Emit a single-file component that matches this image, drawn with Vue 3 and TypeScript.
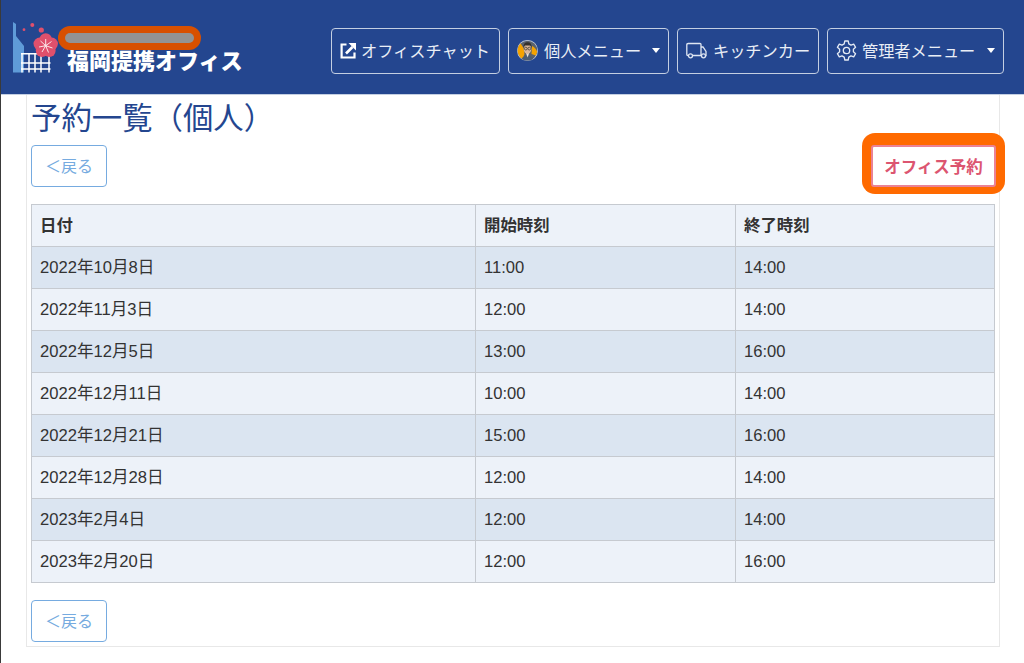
<script setup lang="ts">
const rows: string[][] = [
  ['2022年10月8日', '11:00', '14:00'],
  ['2022年11月3日', '12:00', '14:00'],
  ['2022年12月5日', '13:00', '16:00'],
  ['2022年12月11日', '10:00', '14:00'],
  ['2022年12月21日', '15:00', '16:00'],
  ['2022年12月28日', '12:00', '14:00'],
  ['2023年2月4日', '12:00', '14:00'],
  ['2023年2月20日', '12:00', '16:00'],
]
const petals = [
  [32.7, 19.4],
  [38.7, 23.8],
  [36.4, 30.8],
  [29, 30.8],
  [26.7, 23.8],
]
const stamens = [
  [32.7, 19],
  [38.5, 21.5],
  [39.5, 28],
  [35.5, 32.5],
  [29, 32],
  [26, 27],
  [27.5, 21],
]
</script>

<template>
  <div class="page">
    <header class="topbar">
      <div class="brand">
        <svg class="logo" width="56" height="60" viewBox="0 0 56 60">
          <path d="M0 2 L3 4 L3 16 L11 26 L11 52.5 L0 52.5 Z" fill="#5f9bd8" />
          <circle cx="11" cy="9.7" r="1.4" fill="#e0506c" />
          <circle cx="19.3" cy="5" r="2" fill="#e0506c" />
          <circle cx="28.3" cy="10" r="2.6" fill="#e0506c" />
          <g fill="none" stroke="#fff" stroke-width="1.5">
            <path d="M8 33.7 H37.5 M8 43 H37.5 M8 49 H37.5" />
            <path d="M9 33 V52.5 M16 33 V52.5 M22 33 V52.5 M28 33 V52.5 M36 33 V52.5" />
          </g>
          <g fill="#e0506c">
            <circle v-for="p in petals" :key="p[0] + '-' + p[1]" :cx="p[0]" :cy="p[1]" r="6.2" />
            <circle cx="32.7" cy="25.7" r="6" />
          </g>
          <g stroke="#fbe3e7" stroke-width="1" fill="#fbe3e7">
            <line v-for="s in stamens" :key="s[0]" x1="32.7" y1="25.7" :x2="s[0]" :y2="s[1]" />
            <circle cx="32.7" cy="25.7" r="0.8" />
          </g>
        </svg>
        <span class="brand-name">福岡提携オフィス</span>
        <span class="redact"><span class="redact-inner"></span></span>
      </div>
      <nav class="nav">
        <button class="nav-btn chat">
          <svg width="17" height="17" viewBox="0 0 17 17" fill="none" stroke="#fff" stroke-width="2.2">
            <path d="M6.5 2.5 H1.6 V15.5 H14.5 V10.5" />
            <path d="M6 11.5 L12.5 5" stroke-width="2.6" />
            <path d="M8.5 1 H16 V8.5 Z" fill="#fff" stroke="none" />
          </svg>
          <span>オフィスチャット</span>
        </button>
        <button class="nav-btn personal">
          <svg width="21" height="21" viewBox="0 0 21 21">
            <circle cx="10.5" cy="10.5" r="10.5" fill="#c9d0dc" />
            <circle cx="10.5" cy="10.5" r="9.8" fill="#59616d" />
            <path d="M3.6 3.6 A9.8 9.8 0 0 0 5.5 19 L7.5 14 L6.5 8 Z" fill="#f5a300" />
            <path d="M15 6 A9.8 9.8 0 0 1 20.2 12 L18.8 15.5 L14.5 14 Z" fill="#f5a300" />
            <path d="M4.5 19 Q10.5 11.5 16.5 19 Q10.5 22 4.5 19 Z" fill="#4d5d72" />
            <path d="M9 13 H12.2 L10.6 17.5 Z" fill="#e8e4dc" />
            <ellipse cx="10.5" cy="9" rx="3.8" ry="5" fill="#d8b79a" />
            <path d="M6.4 8 Q6 2.2 10.7 2.2 Q15 2.2 14.6 8 L13.4 5.6 L7.8 5.6 Z" fill="#34312d" />
            <g fill="none" stroke="#34312d" stroke-width="0.7">
              <circle cx="8.8" cy="8.6" r="1.4" />
              <circle cx="12.3" cy="8.6" r="1.4" />
            </g>
          </svg>
          <span>個人メニュー</span>
          <i class="caret"></i>
        </button>
        <button class="nav-btn truck">
          <svg width="21" height="17" viewBox="0 0 21 17" fill="none" stroke="#dfe6f2" stroke-width="1.3">
            <path d="M2.4 13.5 H1.8 Q0.8 13.5 0.8 12.4 V2.8 Q0.8 1.5 2.2 1.5 H14 Q15 1.5 15 2.6 V13.5 H6.6" />
            <path d="M15 5 H17 L20 9.5 V13.5 H19.6" />
            <path d="M15 13.5 H15.4" />
            <circle cx="4.5" cy="13.8" r="2" />
            <circle cx="17.5" cy="13.8" r="2" />
          </svg>
          <span>キッチンカー</span>
        </button>
        <button class="nav-btn admin">
          <svg width="21" height="21" viewBox="0 0 21 21" fill="none" stroke="#e4eaf4" stroke-width="1.3" stroke-linejoin="round">
            <circle cx="10.5" cy="10.5" r="3.2" />
            <path d="M8.8 1 H12.2 L12.8 3.9 L15 5.1 L17.7 4.1 L19.6 7.3 L17.4 9.2 V11.8 L19.6 13.7 L17.7 16.9 L15 15.9 L12.8 17.1 L12.2 20 H8.8 L8.2 17.1 L6 15.9 L3.3 16.9 L1.4 13.7 L3.6 11.8 V9.2 L1.4 7.3 L3.3 4.1 L6 5.1 L8.2 3.9 Z" />
          </svg>
          <span>管理者メニュー</span>
          <i class="caret"></i>
        </button>
      </nav>
    </header>

    <main class="card">
      <h1 class="title">予約一覧（個人）</h1>
      <div class="actions">
        <button class="back">＜戻る</button>
        <span class="reserve-ring"><button class="reserve">オフィス予約</button></span>
      </div>
      <table class="list">
        <thead>
          <tr>
            <th class="c1">日付</th>
            <th class="c2">開始時刻</th>
            <th>終了時刻</th>
          </tr>
        </thead>
        <tbody>
          <tr v-for="r in rows" :key="r[0]">
            <td v-for="c in r" :key="c">{{ c }}</td>
          </tr>
        </tbody>
      </table>
      <div class="foot">
        <button class="back">＜戻る</button>
      </div>
    </main>
  </div>
</template>

<style>
html, body { margin: 0; background: #fff; }
</style>

<style scoped>
.page {
  width: 1024px;
  height: 663px;
  overflow: hidden;
  background: #fff;
  font-family: "Liberation Sans", "Noto Sans CJK JP", sans-serif;
  color: #333;
  box-sizing: border-box;
  border-left: 1px solid #3a3a3a;
}
.topbar {
  height: 95px;
  box-sizing: border-box;
  background: #24468f;
  border-bottom: 1px solid #c4cfe2;
  display: flex;
  align-items: flex-start;
  justify-content: space-between;
  padding: 28px 20px 0 12px;
}
.brand { position: relative; display: flex; align-items: flex-start; }
.logo { margin-top: -8px; flex: none; margin-right: -2px; }
.brand-name {
  margin-top: 19px;
  font-size: 22px;
  line-height: 30px;
  font-weight: 900;
  color: #fff;
  white-space: nowrap;
}
.redact {
  position: absolute;
  left: 45px;
  top: -2px;
  width: 143px;
  height: 24px;
  box-sizing: border-box;
  padding: 7px;
  border-radius: 12px;
  background: #d85000;
}
.redact-inner {
  display: block;
  height: 10px;
  border-radius: 5px;
  background: #939393;
}
.nav { display: flex; gap: 8px; }
.nav-btn {
  height: 46px;
  box-sizing: border-box;
  display: flex;
  align-items: center;
  gap: 6px;
  padding: 0 8px 2px;
  background: transparent;
  border: 1px solid #c4cfe2;
  border-radius: 4px;
  color: #e9eef6;
  font-family: inherit;
  font-size: 16.2px;
  white-space: nowrap;
}
.nav-btn svg { flex: none; }
.chat { width: 169px; gap: 4px; }
.personal { width: 161px; }
.truck { width: 142px; }
.admin { width: 177px; gap: 5px; }
.caret {
  width: 0;
  height: 0;
  flex: none;
  margin-left: auto;
  border-left: 4.5px solid transparent;
  border-right: 4.5px solid transparent;
  border-top: 5px solid #fff;
}
.card {
  margin: 0 24px 0 25px;
  height: 552px;
  box-sizing: border-box;
  border: 1px solid #e8e8e8;
  border-top: 0;
  padding: 0 4px;
}
.title {
  margin: 0;
  height: 50px;
  font-size: 30.4px;
  line-height: 46px;
  font-weight: 400;
  color: #24468f;
}
.actions {
  display: flex;
  justify-content: space-between;
  align-items: flex-start;
  height: 59px;
}
.back {
  width: 76px;
  height: 42px;
  box-sizing: border-box;
  background: #fff;
  border: 1px solid #76abe0;
  border-radius: 4px;
  color: #76abe0;
  font-family: inherit;
  font-size: 16px;
  padding: 0 0 2px;
}
.reserve-ring {
  display: block;
  margin: -12px -10px 0 0;
  padding: 12px 9px 7px;
  background: #ff6a00;
  border-radius: 13px;
}
.reserve {
  display: block;
  width: 125px;
  height: 42px;
  box-sizing: border-box;
  background: #fff;
  border: 2px solid #ea8296;
  border-radius: 3px;
  color: #dc5570;
  font-family: inherit;
  font-size: 16.5px;
  font-weight: 700;
  padding: 0;
}
.list {
  width: 964px;
  table-layout: fixed;
  border-collapse: collapse;
  font-size: 16.6px;
  line-height: 20px;
  color: #333;
}
.list th, .list td {
  height: 42px;
  box-sizing: border-box;
  padding: 0 8px;
  border: 1px solid #c6cad0;
  text-align: left;
  font-weight: 400;
}
.list th { font-weight: 700; background: #edf2f9; font-size: 16.4px; padding-bottom: 1px; }
.c1 { width: 444px; }
.c2 { width: 260px; }
.list tbody tr:nth-child(odd) td { background: #dbe5f1; }
.list tbody tr:nth-child(even) td { background: #edf2f9; }
.foot { margin-top: 17px; }
</style>
